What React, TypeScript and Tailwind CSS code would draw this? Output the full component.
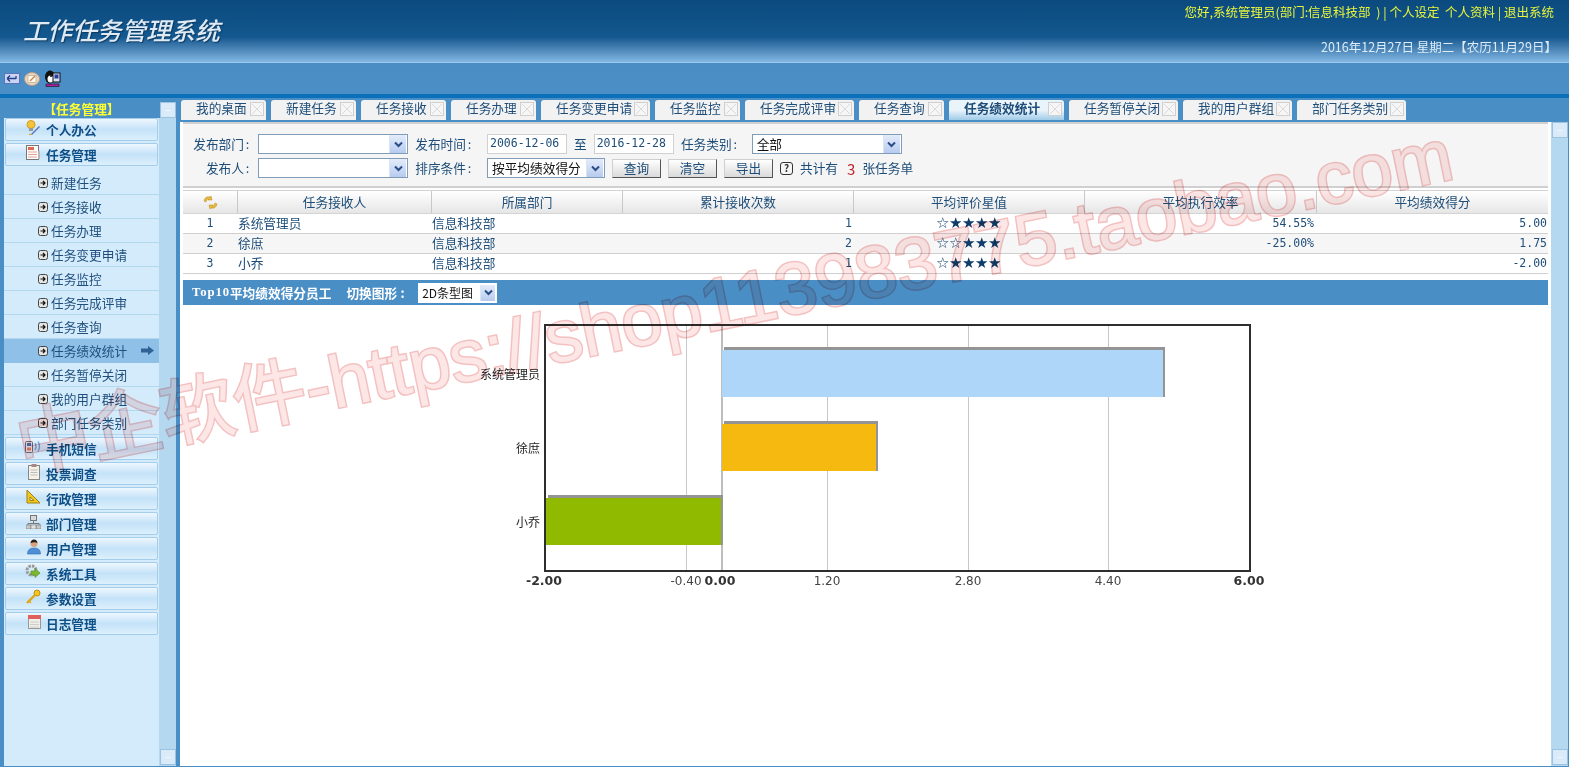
import React from "react";

const tabs = [
  { t: "我的桌面", w: 85 },
  { t: "新建任务", w: 85 },
  { t: "任务接收", w: 85 },
  { t: "任务办理", w: 85 },
  { t: "任务变更申请", w: 109 },
  { t: "任务监控", w: 85 },
  { t: "任务完成评审", w: 109 },
  { t: "任务查询", w: 85 },
  { t: "任务绩效统计", w: 115, on: true },
  { t: "任务暂停关闭", w: 109 },
  { t: "我的用户群组", w: 109 },
  { t: "部门任务类别", w: 109 },
];

const subs = ["新建任务", "任务接收", "任务办理", "任务变更申请", "任务监控", "任务完成评审", "任务查询", "任务绩效统计", "任务暂停关闭", "我的用户群组", "部门任务类别"];

const cols = "grid grid-cols-[54px_194px_191px_231px_231px_232px_232px]";
const mono = "font-['DejaVu_Sans_Mono',monospace] text-[11.500px]";

function SubIcon() {
  return (
    <svg width="10" height="10" viewBox="0 0 10 10" className="shrink-0">
      <rect x="0.5" y="0.5" width="9" height="9" rx="2" fill="#e4e6e4" stroke="#444" />
      <path d="M2.5 5h4.500M5 3l2 2-2 2" fill="none" stroke="#111" strokeWidth="1.200" />
    </svg>
  );
}

function CloseBox() {
  return (
    <svg width="14" height="14" viewBox="0 0 14 14" className="shrink-0 mt-[2px]">
      <rect x="0.5" y="0.5" width="13" height="13" fill="#f6f6f6" stroke="#cfcfcf" />
      <path d="M2 2l10 10M12 2L2 12" stroke="#dadada" strokeWidth="1" />
    </svg>
  );
}

function Chevron({ w = 17 }: { w?: number }) {
  return (
    <span className="flex h-full items-center justify-center border-l border-[#dbe6f5] bg-gradient-to-b from-[#e4ecfb] to-[#b7cbef]" style={{ width: w }}>
      <svg width="9" height="7" viewBox="0 0 9 7">
        <path d="M1 1.5l3.5 3.5L8 1.5" fill="none" stroke="#2b4d86" strokeWidth="2" />
      </svg>
    </span>
  );
}

function Sel({ w, text, cls }: { w: number; text?: string; cls?: string }) {
  return (
    <div className={"flex h-[20px] items-center justify-between border border-[#7f9db9] bg-white pl-[4px] pr-px text-[12.7px] text-[#111] " + (cls || "")} style={{ width: w }}>
      <span className="leading-none">{text}</span>
      <span className="h-[18px]"><Chevron /></span>
    </div>
  );
}

function Btn({ t }: { t: string }) {
  return (
    <div className="flex h-[19px] w-[49px] items-center justify-center border border-[#cfcfcf] border-r-[#555] border-b-[#555] bg-gradient-to-b from-white to-[#dadada] text-[12.7px] text-[#1d4d78]">
      {t}
    </div>
  );
}

function Label({ t, w }: { t: string; w: number }) {
  return (
    <div className="text-right text-[12.7px] leading-none text-[#1d4d78] whitespace-nowrap" style={{ width: w }}>
      {t}
      <span className="inline-block w-[7px] text-center">:</span>
    </div>
  );
}

function MenuIcon({ k }: { k: string }) {
  const c = "shrink-0";
  switch (k) {
    case "bulb":
      return (
        <svg width="16" height="16" viewBox="0 0 16 16" className={c}>
          <circle cx="6" cy="4.5" r="4" fill="#f2c53d" stroke="#d89a1c" />
          <rect x="4" y="8" width="4" height="3" fill="#9a9a9a" />
          <path d="M6 14l8-8 1 1-8 8z" fill="#5d78c2" />
          <path d="M4 14h3v1H4z" fill="#d94" />
        </svg>
      );
    case "doc":
      return (
        <svg width="15" height="16" viewBox="0 0 15 16" className={c}>
          <rect x="0.5" y="0.5" width="12" height="14" fill="#fff" stroke="#777" />
          <rect x="2" y="2" width="6" height="3" fill="#e06a50" />
          <path d="M2 7h9M2 9.5h9M2 12h9" stroke="#e5a090" />
          <rect x="12" y="6" width="2" height="8" fill="#b8b8b8" />
        </svg>
      );
    case "speaker":
      return (
        <svg width="16" height="15" viewBox="0 0 16 15" className={c}>
          <rect x="0.5" y="2.5" width="7" height="11" rx="1" fill="#dfe5ee" stroke="#667" />
          <rect x="2" y="4" width="4" height="3" fill="#4a6fb0" />
          <rect x="2" y="8.5" width="4" height="3" fill="#d87a5c" />
          <path d="M10 4q2 3.5 0 7M13 2.5q3 5 0 10" fill="none" stroke="#6aa0d8" strokeWidth="1.4" />
        </svg>
      );
    case "clip":
      return (
        <svg width="13" height="16" viewBox="0 0 13 16" className={c}>
          <rect x="0.5" y="1.5" width="11" height="14" fill="#f4f2e8" stroke="#888" />
          <rect x="3.5" y="0" width="5" height="3" fill="#a88" />
          <path d="M2.5 6h7M2.5 8.5h7M2.5 11h7" stroke="#bbb" />
        </svg>
      );
    case "ruler":
      return (
        <svg width="15" height="15" viewBox="0 0 15 15" className={c}>
          <path d="M1 1v13h13z" fill="#f2c820" stroke="#a08010" />
          <path d="M4 8v3.5h4z" fill="#dff0fb" stroke="#a08010" />
        </svg>
      );
    case "net":
      return (
        <svg width="15" height="14" viewBox="0 0 15 14" className={c}>
          <rect x="4.5" y="0.5" width="6" height="5" fill="#d8d8d8" stroke="#777" />
          <path d="M7.5 5.5v3M2 10.5v-2h11v2" fill="none" stroke="#777" />
          <rect x="0" y="10" width="5" height="4" fill="#c8c8c8" stroke="#777" strokeWidth=".6" />
          <rect x="10" y="10" width="5" height="4" fill="#c8c8c8" stroke="#777" strokeWidth=".6" />
          <rect x="5" y="10" width="5" height="4" fill="#e4e4e4" stroke="#777" strokeWidth=".6" />
        </svg>
      );
    case "user":
      return (
        <svg width="14" height="16" viewBox="0 0 14 16" className={c}>
          <circle cx="7" cy="4.5" r="3.5" fill="#dca27a" />
          <path d="M3.5 4Q4 .5 7 .5T10.500 4Q8 2.500 3.500 4z" fill="#222" />
          <path d="M0.500 15q0-6 6.500-6t6.500 6z" fill="#4e8fd6" stroke="#2f6aa8" strokeWidth=".6" />
        </svg>
      );
    case "gear":
      return (
        <svg width="16" height="15" viewBox="0 0 16 15" className={c}>
          <circle cx="6.500" cy="6.500" r="4.500" fill="none" stroke="#9a9a9a" strokeWidth="3" strokeDasharray="2.500 1" />
          <path d="M6 7h4V4.500L15 9l-5 4.500V11H6z" fill="#7cb82e" stroke="#4e8a18" strokeWidth=".6" />
        </svg>
      );
    case "key":
      return (
        <svg width="15" height="15" viewBox="0 0 15 15" className={c}>
          <circle cx="11" cy="4" r="3" fill="#f2c820" stroke="#c09010" />
          <path d="M9 6L1 14" stroke="#e0a810" strokeWidth="2.400" />
          <path d="M3 12l2 2" stroke="#e0a810" strokeWidth="1.500" />
        </svg>
      );
    default:
      return (
        <svg width="13" height="14" viewBox="0 0 13 14" className={c}>
          <rect x="0.500" y="0.500" width="12" height="13" fill="#f2efe6" stroke="#999" />
          <rect x="0" y="0" width="13" height="4" fill="#e0605a" />
          <path d="M2 7h9M2 9.500h9M2 12h9" stroke="#ccc" />
        </svg>
      );
  }
}

function MenuHead({ t, k }: { t: string; k: string }) {
  return (
    <div className="mx-px mb-[2px] flex h-[23px] items-center rounded-[2px] border border-[#a3cdeb] bg-gradient-to-b from-[#eef7fe] via-[#c4e2f8] to-[#dcf0fc]">
      <span className="flex w-[35px] justify-end -mt-[4px]"><MenuIcon k={k} /></span>
      <span className="ml-[5px] mt-[2px] text-[12.7px] font-bold leading-none text-[#0f4f86]">{t}</span>
    </div>
  );
}

function SideBtn({ cls }: { cls?: string }) {
  return (
    <div className={"flex h-[16px] w-[16px] items-center justify-center border border-[#9cc4e0] bg-[#d9ebf8] " + (cls || "")}>
      <div className="h-px w-[6px] bg-[#eef6fc]" />
    </div>
  );
}

function Stars({ n }: { n: number }) {
  return (
    <div className="flex justify-center font-['DejaVu_Sans',sans-serif] text-[15px] leading-none text-[#0f3d6a]">
      {[0, 1, 2, 3, 4].map((i) => (
        <span key={i} className="inline-block w-[13px] text-center">{i < n ? "☆" : "★"}</span>
      ))}
    </div>
  );
}

const rows = [
  { n: "1", name: "系统管理员", c: "1", s: 1, e: "54.55%", g: "5.00" },
  { n: "2", name: "徐庶", c: "2", s: 2, e: "-25.00%", g: "1.75" },
  { n: "3", name: "小乔", c: "1", s: 1, e: "", g: "-2.00" },
];

const heads = ["任务接收人", "所属部门", "累计接收次数", "平均评价星值", "平均执行效率", "平均绩效得分"];

function Chart() {
  const fs = "'DejaVu Sans', sans-serif";
  const cjk = "'Noto Sans CJK SC', sans-serif";
  const ox = 470, oy = 320;
  const X = (v: number) => v - ox;
  const Y = (v: number) => v - oy;
  const grid = [686, 827, 968, 1108];
  const bar = (x: number, y: number, w: number, fill: string) => (
    <g>
      <rect x={X(x) + 2} y={Y(y)} width={w} height={3} fill="#949494" />
      <rect x={X(x + w)} y={Y(y)} width={2} height={50} fill="#949494" />
      <rect x={X(x)} y={Y(y) + 3} width={w} height={47} fill={fill} />
    </g>
  );
  return (
    <svg width="810" height="280" viewBox="0 0 810 280" className="block">
      {grid.map((g) => (
        <rect key={g} x={X(g)} y={Y(325)} width="1" height="246" fill="#c8c8c8" />
      ))}
      <rect x={X(721)} y={Y(325)} width="2" height="246" fill="#bdbdbd" />
      {bar(722, 347, 441, "#aed6f8")}
      {bar(722, 421, 154, "#f6b90f")}
      {bar(546, 495, 175, "#8fba00")}
      <rect x={X(545)} y={Y(325)} width="705" height="246" fill="none" stroke="#2e2e2e" strokeWidth="2" />
      <g fontFamily={cjk} fontSize="12" fill="#222" textAnchor="end">
        <text x={X(540)} y={Y(379)}>系统管理员</text>
        <text x={X(540)} y={Y(453)}>徐庶</text>
        <text x={X(540)} y={Y(527)}>小乔</text>
      </g>
      <g fontFamily={fs} fontSize="12.500" textAnchor="middle">
        <text x={X(544)} y={Y(585)} fontWeight="bold" fill="#333">-2.00</text>
        <text x={X(686)} y={Y(585)} fill="#444" fontSize="12">-0.40</text>
        <text x={X(720)} y={Y(585)} fontWeight="bold" fill="#333">0.00</text>
        <text x={X(827)} y={Y(585)} fill="#444" fontSize="12">1.20</text>
        <text x={X(968)} y={Y(585)} fill="#444" fontSize="12">2.80</text>
        <text x={X(1108)} y={Y(585)} fill="#444" fontSize="12">4.40</text>
        <text x={X(1249)} y={Y(585)} fontWeight="bold" fill="#333">6.00</text>
      </g>
    </svg>
  );
}

export default function App() {
  return (
    <div className="relative flex h-[767px] w-[1569px] flex-col overflow-hidden bg-[#4a8ec6] font-['Noto_Sans_CJK_SC',sans-serif]">
      {/* header */}
      <div className="flex h-[62px] shrink-0 justify-between bg-gradient-to-b from-[#0b4a7e] via-[#13588f] via-60% to-[#82b8e4] pl-[23px] pr-[15px]">
        <div className="mt-[13px] text-[24.6px] font-medium italic leading-[32px] text-[#dfeaf4] [text-shadow:1px_1px_1px_#0b3a60]">工作任务管理系统</div>
        <div className="flex flex-col items-end">
          <div className="mt-[4px] whitespace-pre text-[12.500px] leading-[16px] text-[#e8f53c]">您好,系统管理员(部门:信息科技部  ) | 个人设定  个人资料 | 退出系统</div>
          <div className="-mr-[3px] mt-[19px] whitespace-pre text-[12.500px] leading-[16px] text-[#dcecf8]">2016年12月27日 星期二【农历11月29日】</div>
        </div>
      </div>
      {/* toolbar */}
      <div className="flex h-[32px] shrink-0 items-center gap-[4px] border-t border-[#9cc6ea] bg-gradient-to-b from-[#4a8cc4] to-[#4c8fc6] pl-[4px]">
        <svg width="16" height="11" viewBox="0 0 16 11">
          <rect x="0.500" y="0.500" width="15" height="10" fill="#c8d4f2" stroke="#5b73b8" />
          <path d="M3 5.500h9M3 5.500l3-3M3 5.500l3 3M12 3v3" fill="none" stroke="#27408c" strokeWidth="1.300" />
        </svg>
        <svg width="16" height="14" viewBox="0 0 16 14">
          <ellipse cx="8" cy="7" rx="7.500" ry="6.500" fill="#e8d8c0" stroke="#b89a80" />
          <rect x="4" y="3.500" width="8" height="7" fill="#fff7e0" stroke="#a99" strokeWidth=".6" />
          <path d="M6 9l5-5" stroke="#c08060" strokeWidth="1.200" />
        </svg>
        <svg width="17" height="17" viewBox="0 0 17 17">
          <ellipse cx="6" cy="7" rx="5" ry="6.500" fill="#111" />
          <ellipse cx="6.500" cy="9" rx="3" ry="3.500" fill="#fff" />
          <circle cx="7" cy="6" r="1" fill="#111" />
          <rect x="9" y="3" width="7" height="9" fill="#d8e0f0" stroke="#111" />
          <rect x="10.500" y="4.500" width="4" height="4" fill="#2a3f9e" />
          <path d="M2 14h13v2.500H2z" fill="#b020a0" stroke="#111" strokeWidth=".6" />
        </svg>
      </div>
      <div className="h-[4px] shrink-0 bg-[#0c6fba]" />
      {/* main */}
      <div className="flex min-h-0 flex-1 pb-px">
        {/* sidebar */}
        <div className="flex w-[180px] shrink-0 flex-col pl-[4px]">
          <div className="flex h-[20px] shrink-0">
            <div className="w-[155px] pt-[1px] text-center text-[12.7px] font-bold leading-[19px] text-[#ffff33]">【任务管理】</div>
          </div>
          <div className="flex min-h-0 flex-1">
            <div className="w-[155px] bg-[#d4ebfb]">
              <MenuHead t="个人办公" k="bulb" />
              <MenuHead t="任务管理" k="doc" />
              <div className="mb-[2px] pt-[3px]">
                {subs.map((s, i) => (
                  <div key={s} className={"flex h-[24px] items-center border-b pl-[34px] text-[12.7px] leading-none text-[#1f4f7c] " + (i === 7 ? "border-[#8fc0e8] bg-[#8fc0e8]" : "border-[#b2d8f0]")}>
                    <SubIcon />
                    <span className="ml-[3px] mt-[2px]">{s}</span>
                    {i === 7 && (
                      <svg width="13" height="9" viewBox="0 0 13 9" className="ml-auto mr-[5px]">
                        <path d="M0 2.500h7V0l6 4.500-6 4.500V6.500H0z" fill="#2f6295" />
                      </svg>
                    )}
                  </div>
                ))}
              </div>
              <MenuHead t="手机短信" k="speaker" />
              <MenuHead t="投票调查" k="clip" />
              <MenuHead t="行政管理" k="ruler" />
              <MenuHead t="部门管理" k="net" />
              <MenuHead t="用户管理" k="user" />
              <MenuHead t="系统工具" k="gear" />
              <MenuHead t="参数设置" k="key" />
              <MenuHead t="日志管理" k="cal" />
            </div>
            <div className="relative flex w-[17px] flex-col justify-end bg-[#b4d8f0]">
              <SideBtn cls="absolute -top-[16px] left-px" />
              <SideBtn cls="mb-[1px] ml-px" />
            </div>
          </div>
        </div>
        {/* content */}
        <div className="flex min-w-0 flex-1 flex-col">
          <div className="flex h-[24px] shrink-0 gap-[5px] pl-px pt-[2px]">
            {tabs.map((t) => (
              <div
                key={t.t}
                className={"flex h-[20px] items-start justify-between rounded-t-[3px] pl-[15px] pr-[2px] text-[12.7px] leading-[16px] text-[#1d4d78] " + (t.on ? "bg-gradient-to-b from-[#eaf4fb] via-[#eaf4fb] to-[#9fcbe8] font-bold" : "bg-[#f2f2f2]")}
                style={{ width: t.w }}
              >
                <span className="whitespace-nowrap">{t.t}</span>
                <CloseBox />
              </div>
            ))}
          </div>
          <div className="flex min-h-0 flex-1 pr-px">
            <div className="w-[1371px] shrink-0 bg-white px-[3px]">
              <div className="h-[66px] border-y-2 border-[#d0d0d0] bg-[#f5f5f5] pt-[10px]">
                <div className="flex h-[20px] items-center">
                  <Label t="发布部门" w={68} />
                  <Sel w={150} cls="ml-[7px]" />
                  <Label t="发布时间" w={65} />
                  <div className={"ml-[14px] flex h-[20px] w-[80px] items-center border border-[#d0d0d0] bg-white pl-[2px] text-[#1d4d78] " + mono}>2006-12-06</div>
                  <div className="ml-[7px] text-[12.7px] leading-none text-[#1d4d78]">至</div>
                  <div className={"ml-[7px] flex h-[20px] w-[80px] items-center border border-[#d0d0d0] bg-white pl-[2px] text-[#1d4d78] " + mono}>2016-12-28</div>
                  <Label t="任务类别" w={65} />
                  <Sel w={150} text="全部" cls="ml-[13px]" />
                </div>
                <div className="mt-[4px] flex h-[20px] items-center">
                  <Label t="发布人" w={68} />
                  <Sel w={150} cls="ml-[7px]" />
                  <Label t="排序条件" w={65} />
                  <Sel w={118} text="按平均绩效得分" cls="ml-[14px]" />
                  <div className="ml-[7px] flex gap-[7px]">
                    <Btn t="查询" />
                    <Btn t="清空" />
                    <Btn t="导出" />
                  </div>
                  <div className="ml-[7px] flex h-[13px] w-[13px] items-center justify-center rounded-[3px] border border-[#333] text-[10px] font-bold leading-none text-[#333]">?</div>
                  <div className="ml-[7px] text-[12.7px] leading-none text-[#1d4d78]">共计有</div>
                  <div className="ml-[9px] text-[15px] leading-none text-[#c0262c]">3</div>
                  <div className="ml-[7px] text-[12.7px] leading-none text-[#1d4d78]">张任务单</div>
                </div>
              </div>
              <div className={cols + " mt-[2px] h-[24px] border-y border-[#d4d4d4] bg-gradient-to-b from-white to-[#e6e6e6] text-[12.7px] leading-[21px] text-[#1d4d78]"}>
                <div className="flex items-center justify-center">
                  <svg width="15" height="15" viewBox="0 0 15 15">
                    <path d="M1 6Q2 1 7 2l1-1 1 4-4 0 1-1Q4 3 3 7zM14 9q-1 5-6 4l-1 1-1-4h4l-1 1q2 1 3-3z" fill="#e8b83a" stroke="#b88a20" strokeWidth=".5" />
                  </svg>
                </div>
                {heads.map((h) => (
                  <div key={h} className="border-l border-[#c8c8c8] text-center">{h}</div>
                ))}
              </div>
              {rows.map((r, i) => (
                <div key={r.n} className={cols + " h-[20px] items-center border-b border-[#cfcfcf] text-[12.7px] leading-none text-[#1d4d78] " + (i === 1 ? "bg-[#f6f6f6]" : "bg-white")}>
                  <div className={"text-center " + mono}>{r.n}</div>
                  <div className="pl-[1px]">{r.name}</div>
                  <div className="pl-px">信息科技部</div>
                  <div className={"pr-px text-right " + mono}>{r.c}</div>
                  <Stars n={r.s} />
                  <div className={"pr-[2px] text-right " + mono}>{r.e}</div>
                  <div className={"pr-px text-right " + mono}>{r.g}</div>
                </div>
              ))}
              <div className="mt-[6px] flex h-[25px] items-center bg-[#4a8ec6] pl-[9px] font-bold text-white">
                <span className="font-['Liberation_Serif','Noto_Sans_CJK_SC',serif] text-[12.7px] tracking-[0.9px]">Top10</span>
                <span className="text-[12.7px]">平均绩效得分员工</span>
                <span className="ml-[15px] text-[12.7px]">切换图形<span className="inline-block w-[11px] text-center">:</span></span>
                <div className="ml-[10px] flex h-[20px] w-[79px] items-center justify-between bg-white pl-[4px] pr-[2px] text-[12px] font-normal text-[#111]">
                  <span>2D条型图</span>
                  <span className="h-[16px]"><Chevron w={15} /></span>
                </div>
              </div>
              <div className="ml-[287px] mt-[15px]">
                <Chart />
              </div>
            </div>
            <div className="flex w-[17px] flex-col justify-between bg-[#b4d8f0] pl-px">
              <SideBtn />
              <SideBtn cls="mb-px" />
            </div>
          </div>
        </div>
      </div>
      {/* watermark */}
      <div className="pointer-events-none absolute left-[18px] top-[412px] origin-left -rotate-[11.6deg] whitespace-nowrap font-['Liberation_Sans','Noto_Sans_CJK_SC',sans-serif] text-[73.400px] leading-none text-[#fde2e2] opacity-85 mix-blend-multiply [paint-order:stroke_fill] [-webkit-text-stroke:3px_#f2b6b6]">
        中企软件-https://shop113983775.taobao.com
      </div>
    </div>
  );
}
